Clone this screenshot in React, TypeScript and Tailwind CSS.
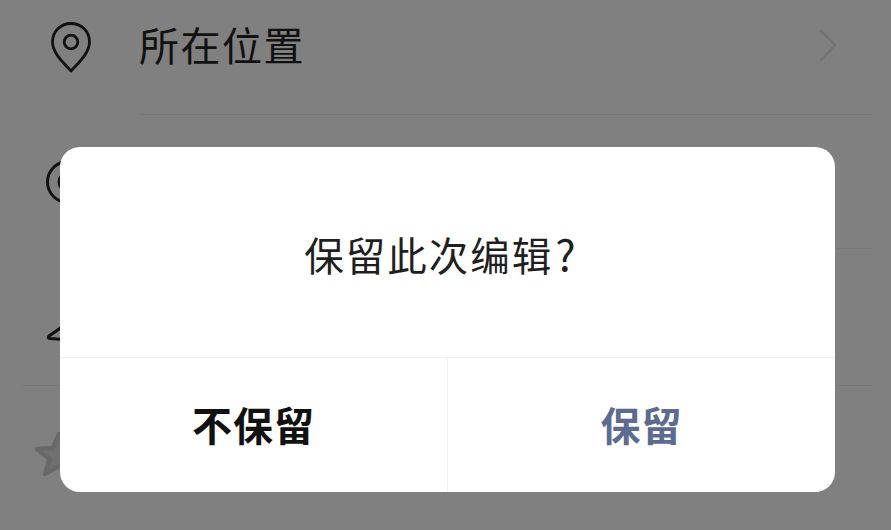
const cjk = "font-['Noto_Sans_CJK_SC','Noto_Sans',sans-serif]"

function PinIcon() {
  return (
    <svg width="42" height="52" viewBox="0 0 42 52" fill="none" stroke="#111" strokeWidth="2.8">
      <path d="M21 50 C16 44 2.5 33 2.5 21 C2.5 10.5 10.5 2.5 21 2.5 C31.5 2.5 39.5 10.5 39.5 21 C39.5 33 26 44 21 50 Z" strokeLinejoin="round" />
      <circle cx="21" cy="21" r="6.8" />
    </svg>
  )
}

function CircleIcon() {
  return (
    <svg width="44" height="46" viewBox="0 0 44 46" fill="none" stroke="#111" strokeWidth="3">
      <circle cx="22" cy="23" r="20.5" />
      <circle cx="22" cy="23" r="9" />
    </svg>
  )
}

function BottomIcon() {
  return (
    <svg width="44" height="44" viewBox="0 0 44 44" fill="none" stroke="#111" strokeWidth="3.2" strokeLinecap="round" strokeLinejoin="round">
      <path d="M16 26 L3 35 Q1.5 37 4 37.5 L24 39" />
    </svg>
  )
}

function StarIcon() {
  return (
    <svg width="50" height="46" viewBox="0 0 50 46" fill="#707070" stroke="#686868" strokeWidth="4.5" strokeLinejoin="round">
      <path d="M25 3 L31 17 L47 18 L34.5 28 L39 43 L25 35 L11 43 L15.5 28 L3 18 L19 17 Z" />
    </svg>
  )
}

export default function App() {
  return (
    <div className={`relative h-[530px] w-[891px] overflow-hidden bg-[#808080] ${cjk}`}>
      {/* page behind the dimmed overlay */}
      <div className="flex flex-col pr-[19px]">
        <div className="ml-[139px] flex h-[115px] items-center justify-between border-b border-[#787878] pb-[26px]">
          <span className="text-[40px] leading-none tracking-[1.5px] text-[#111]">所在位置</span>
          <svg width="20" height="34" viewBox="0 0 20 34" fill="none" stroke="#747474" strokeWidth="2.5" className="mr-[34px] mt-[4px]">
            <path d="M2 1 L17 16 L2 32" />
          </svg>
        </div>
        <div className="ml-[140px] h-[134px] border-b border-[#787878]" />
        <div className="ml-[22px] h-[137px] border-b border-[#787878]" />
      </div>

      <div className="absolute left-[50px] top-[21px]"><PinIcon /></div>
      <div className="absolute left-[46px] top-[159px]"><CircleIcon /></div>
      <div className="absolute left-[46px] top-[301px]"><BottomIcon /></div>
      <div className="absolute left-[34px] top-[431px]"><StarIcon /></div>

      {/* dialog */}
      <div className="absolute left-[60px] top-[147px] flex h-[345px] w-[775px] flex-col overflow-hidden rounded-[20px] bg-white">
        <div className="flex h-[211px] items-center justify-center border-b border-[#f0f0f0] pr-[13px]">
          <span className="text-[39.5px] leading-none tracking-[2px] text-[#1f1f1f]">
            保留此次编辑<span className="ml-[2px] text-[43px]">?</span>
          </span>
        </div>
        <div className="flex flex-1">
          <div className="flex flex-1 items-center justify-center border-r border-[#f0f0f0] pb-[2px] text-[40px] font-bold leading-none tracking-[1px] text-[#111]">不保留</div>
          <div className="flex flex-1 items-center justify-center pb-[2px] text-[40px] font-bold leading-none tracking-[1px] text-[#5c6b8f]">保留</div>
        </div>
      </div>
    </div>
  )
}
